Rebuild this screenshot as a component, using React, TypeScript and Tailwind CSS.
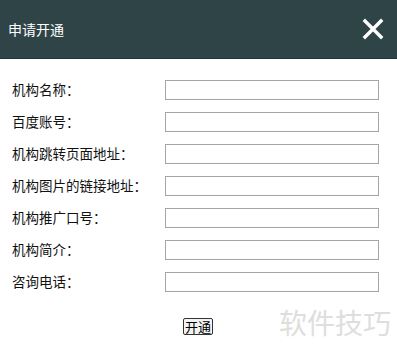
const fields = [
  "机构名称：",
  "百度账号：",
  "机构跳转页面地址：",
  "机构图片的链接地址：",
  "机构推广口号：",
  "机构简介：",
  "咨询电话：",
];

export default function App() {
  return (
    <div
      className="relative w-[397px] h-[358px] bg-white overflow-hidden"
      style={{ fontFamily: '"Noto Sans CJK SC", "Noto Sans", sans-serif' }}
    >
      <div className="h-[59px] bg-[#2f4447] border-b border-[#243638] flex items-center justify-between pl-[8px] pr-[13px]">
        <span className="text-white text-[14px] leading-none">申请开通</span>
        <svg width="22" height="22" viewBox="0 0 22 22" className="mb-[1px]">
          <path d="M3 3 L19 19 M19 3 L3 19" stroke="#ffffff" strokeWidth="3.4" strokeLinecap="square" />
        </svg>
      </div>

      <div className="flex flex-col gap-[12px] pt-[21px] pl-[12px]">
        {fields.map((label) => (
          <div key={label} className="flex items-center h-[20px]">
            <span className="w-[153px] text-[13.5px] text-[#111] leading-none">{label}</span>
            <input
              type="text"
              className="w-[214px] h-[20px] border border-[#a5a5a5] bg-white outline-none"
            />
          </div>
        ))}
      </div>

      <div className="pl-[183px] pt-[21px]">
        <button
          type="button"
          className="h-[17px] px-[1px] border border-[#333] rounded-[2px] bg-[#f4f4f4] text-[13px] leading-none text-black"
        >
          开通
        </button>
      </div>

      <span className="absolute left-[279px] top-[308px] text-[28px] leading-none text-[#dedede]">
        软件技巧
      </span>
    </div>
  );
}
